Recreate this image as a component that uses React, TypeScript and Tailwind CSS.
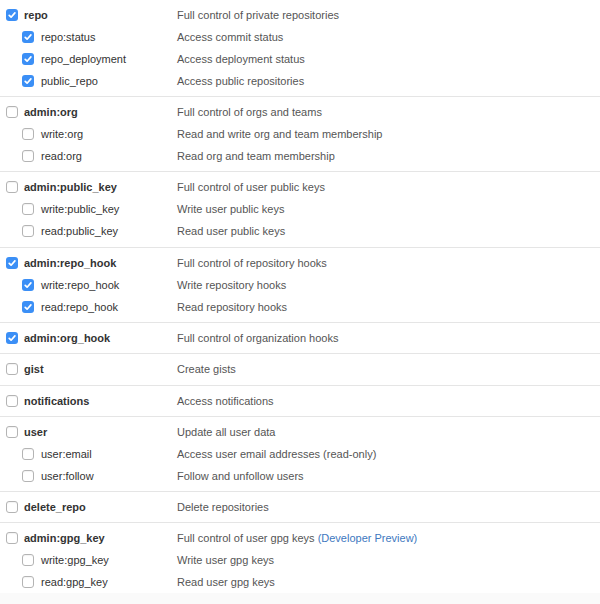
type Scope = { name: string; desc: string; checked: boolean };
type Group = { top: Scope; subs: Scope[]; extra?: boolean; last?: boolean; preview?: boolean };

const groups: Group[] = [
  {
    top: { name: "repo", desc: "Full control of private repositories", checked: true },
    subs: [
      { name: "repo:status", desc: "Access commit status", checked: true },
      { name: "repo_deployment", desc: "Access deployment status", checked: true },
      { name: "public_repo", desc: "Access public repositories", checked: true },
    ],
  },
  {
    top: { name: "admin:org", desc: "Full control of orgs and teams", checked: false },
    subs: [
      { name: "write:org", desc: "Read and write org and team membership", checked: false },
      { name: "read:org", desc: "Read org and team membership", checked: false },
    ],
  },
  {
    top: { name: "admin:public_key", desc: "Full control of user public keys", checked: false },
    subs: [
      { name: "write:public_key", desc: "Write user public keys", checked: false },
      { name: "read:public_key", desc: "Read user public keys", checked: false },
    ],
    extra: true,
  },
  {
    top: { name: "admin:repo_hook", desc: "Full control of repository hooks", checked: true },
    subs: [
      { name: "write:repo_hook", desc: "Write repository hooks", checked: true },
      { name: "read:repo_hook", desc: "Read repository hooks", checked: true },
    ],
  },
  {
    top: { name: "admin:org_hook", desc: "Full control of organization hooks", checked: true },
    subs: [],
  },
  {
    top: { name: "gist", desc: "Create gists", checked: false },
    subs: [],
    extra: true,
  },
  {
    top: { name: "notifications", desc: "Access notifications", checked: false },
    subs: [],
  },
  {
    top: { name: "user", desc: "Update all user data", checked: false },
    subs: [
      { name: "user:email", desc: "Access user email addresses (read-only)", checked: false },
      { name: "user:follow", desc: "Follow and unfollow users", checked: false },
    ],
  },
  {
    top: { name: "delete_repo", desc: "Delete repositories", checked: false },
    subs: [],
  },
  {
    top: { name: "admin:gpg_key", desc: "Full control of user gpg keys", checked: false },
    subs: [
      { name: "write:gpg_key", desc: "Write user gpg keys", checked: false },
      { name: "read:gpg_key", desc: "Read user gpg keys", checked: false },
    ],
    last: true,
    preview: true,
  },
];

function Box({ checked }: { checked: boolean }) {
  if (checked) {
    return (
      <span className="flex h-3 w-3 shrink-0 items-center justify-center rounded-[3px] bg-[#3b8ff6]">
        <svg viewBox="0 0 12 12" className="h-3 w-3">
          <path d="M3.2 6.3 L5.1 8.2 L8.9 3.9" fill="none" stroke="white" strokeWidth="1.7" strokeLinecap="round" strokeLinejoin="round" />
        </svg>
      </span>
    );
  }
  return <span className="h-3 w-3 shrink-0 rounded-[3px] border border-[#b4b4b4] bg-white shadow-[inset_0_1px_1px_rgba(0,0,0,0.05)]" />;
}

function Row({ scope, sub, preview }: { scope: Scope; sub?: boolean; preview?: boolean }) {
  return (
    <div className="flex h-[22px] items-center">
      <div className={sub ? "flex w-[177px] items-center gap-[7px] pl-[22px]" : "flex w-[177px] items-center gap-[6px] pl-[6px]"}>
        <Box checked={scope.checked} />
        <span className={sub ? "text-[#333]" : "font-bold text-[#333]"}>{scope.name}</span>
      </div>
      <div className="text-[#555]">
        {scope.desc}
        {preview && <span className="text-[#4078c0]"> (Developer Preview)</span>}
      </div>
    </div>
  );
}

export default function App() {
  return (
    <div className="flex h-[604px] w-[600px] flex-col bg-white text-[11px] leading-[22px] [font-family:'Liberation_Sans',Arial,sans-serif]">
      {groups.map((g) => (
        <div
          key={g.top.name}
          className={
            g.last
              ? "pt-1"
              : g.extra
                ? "border-b border-[#e5e5e5] pt-1 pb-[5px]"
                : "border-b border-[#e5e5e5] py-1"
          }
        >
          <Row scope={g.top} preview={g.preview} />
          {g.subs.map((s) => (
            <Row key={s.name} scope={s} sub />
          ))}
        </div>
      ))}
      <div className="flex-1 bg-[#fafafa]" />
    </div>
  );
}
